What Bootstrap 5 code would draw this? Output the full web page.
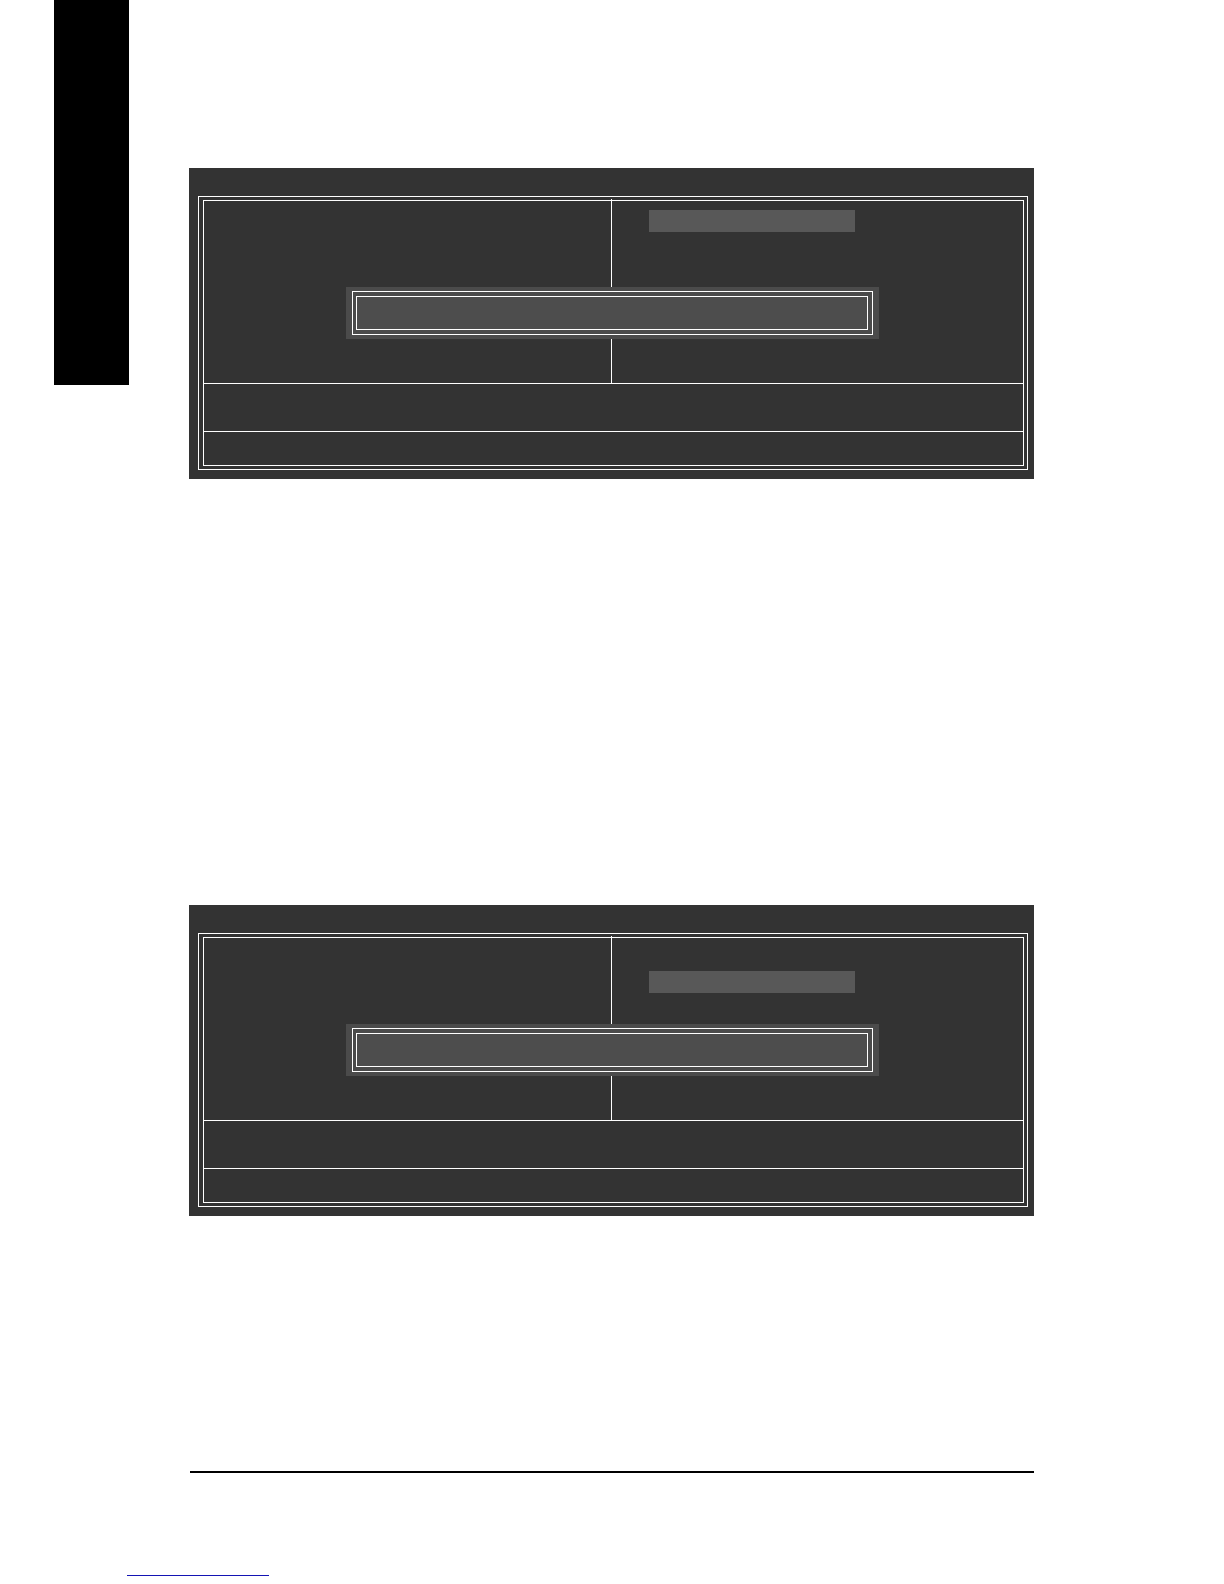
<!DOCTYPE html>
<html lang="en">
<head>
<meta charset="utf-8">
<meta name="viewport" content="width=device-width, initial-scale=1">
<title>Setup screens</title>
<link href="https://cdn.jsdelivr.net/npm/bootstrap@5.3.0/dist/css/bootstrap.min.css" rel="stylesheet">
<style>
  body { background: #fff; font-family: "Liberation Sans", sans-serif; }
  .side-tab { width: 75px; height: 385px; margin-left: 54px; background: #000; }
  .sheet { padding: 168px 190px 0 60px; }
  .bios { background: #333; padding: 28px 6px 9px 9px; }
  .bios + .bios { margin-top: 426px; }
  .frame-outer { border: 1px solid #fff; padding: 3px 3px 3px 4px; }
  .frame-inner { border: 1px solid #fff; }
  .menu-area { height: 182px; }
  .menu-left { width: 49.7%; }
  .menu-right { border-left: 1px solid #fff; margin-top: -2px; padding: 11px 0 0 37px; }
  .menu-right.second-item { padding-top: 35px; }
  .selected-item { width: 206px; height: 22px; background: #585858; }
  .help-row { height: 48px; border-top: 1px solid #fff; }
  .hint-row { height: 34px; border-top: 1px solid #fff; }
  /* Dialog floating over the menu */
  .dialog-box { top: 119px; left: 157px; right: 155px; height: 52px; background: #4b4b4b; padding: 4px 6px; }
  .dialog-outer { border: 1px solid #fff; padding: 4px 4px 4px 3px; }
  .dialog-inner { border: 1px solid #fff; background: #4d4d4d; }
  .foot-rule { height: 2px; margin: 255px 0 0 1px; background: #000; opacity: 1; border: 0; }
  .foot-link { width: 142px; height: 103px; margin-left: 127px; border-bottom: 1px solid #1414b4; }
</style>
</head>
<body>
<div class="d-flex align-items-start">
  <aside class="side-tab flex-shrink-0"></aside>
  <main class="sheet flex-grow-1">
    <section class="bios position-relative">
      <div class="frame-outer">
        <div class="frame-inner">
          <div class="menu-area d-flex">
            <div class="menu-left flex-shrink-0"></div>
            <div class="menu-right flex-grow-1"><div class="selected-item"></div></div>
          </div>
          <div class="help-row"></div>
          <div class="hint-row"></div>
        </div>
      </div>
      <div class="dialog-box position-absolute">
        <div class="dialog-outer h-100"><div class="dialog-inner h-100"></div></div>
      </div>
    </section>
    <section class="bios position-relative">
      <div class="frame-outer">
        <div class="frame-inner">
          <div class="menu-area d-flex">
            <div class="menu-left flex-shrink-0"></div>
            <div class="menu-right second-item flex-grow-1"><div class="selected-item"></div></div>
          </div>
          <div class="help-row"></div>
          <div class="hint-row"></div>
        </div>
      </div>
      <div class="dialog-box position-absolute">
        <div class="dialog-outer h-100"><div class="dialog-inner h-100"></div></div>
      </div>
    </section>
    <hr class="foot-rule">
  </main>
</div>
<footer><a class="foot-link d-block" href="#"></a></footer>
<script src="https://cdn.jsdelivr.net/npm/bootstrap@5.3.0/dist/js/bootstrap.bundle.min.js"></script>
</body>
</html>
